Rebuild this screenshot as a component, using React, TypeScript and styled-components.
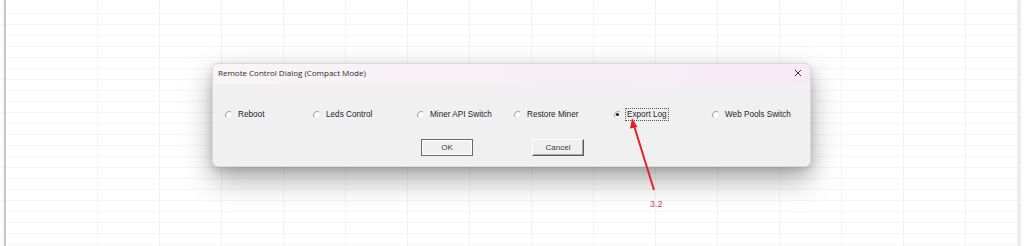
import React from 'react';
import styled, { createGlobalStyle } from 'styled-components';

const GlobalStyle = createGlobalStyle`
  html, body {
    margin: 0;
    padding: 0;
    background: #ffffff;
  }
  body {
    font-family: 'Liberation Sans', Arial, sans-serif;
  }
`;

const Sheet = styled.div`
  position: relative;
  width: 1024px;
  height: 246px;
  box-sizing: border-box;
  padding: 63px 0 0 212px;
  overflow: hidden;
  background-color: #ffffff;
  background-image:
    linear-gradient(to right, #c9c9c9 0 2px, transparent 2px),
    linear-gradient(to left, #ececec 0 4px, transparent 4px),
    repeating-linear-gradient(to right, transparent 0 61px, #f3f3f3 61px 62px),
    repeating-linear-gradient(to bottom, transparent 0 10px, #f5f5f5 10px 11px);
  background-position: 4px 0, -3px 0, 36px 0, 0 3px;
  background-repeat: no-repeat, no-repeat, repeat, repeat;
`;

const Dialog = styled.div`
  width: 599px;
  height: 104px;
  box-sizing: border-box;
  background: #f0f0f0;
  border: 1px solid #dadada;
  border-radius: 6px;
  box-shadow: 0 12px 28px rgba(0, 0, 0, 0.34), 0 3px 8px rgba(0, 0, 0, 0.14);
  display: flex;
  flex-direction: column;
  overflow: hidden;
`;

const TitleBar = styled.div`
  height: 20px;
  flex: none;
  display: flex;
  align-items: center;
  justify-content: space-between;
  padding: 0 8px 3px 5px;
  box-sizing: border-box;
  background: linear-gradient(to right, #f8f5f5, #f6eef5 60%, #f7eaf4);
`;

const Title = styled.span`
  font-family: 'Open Sans', 'Noto Sans', sans-serif;
  font-size: 8px;
  color: #2a2a2a;
`;

const CloseIcon = styled.svg`
  width: 8px;
  height: 8px;
`;

const RadioRow = styled.div`
  display: flex;
  align-items: center;
  height: 14px;
  margin-top: 23px;
  padding-left: 11px;
`;

const RadioItem = styled.label<{ $w: number }>`
  display: flex;
  align-items: center;
  width: ${(p) => p.$w}px;
  flex: none;
  font-size: 8.2px;
  color: #1e1e1e;
  gap: 3px;
`;

const RadioMark = styled.svg`
  width: 9px;
  height: 9px;
  flex: none;
`;

const Label = styled.span<{ $focused?: boolean }>`
  padding: 1px 1px;
  border: 1px dotted ${(p) => (p.$focused ? '#555' : 'transparent')};
`;

const ButtonRow = styled.div`
  display: flex;
  gap: 59px;
  margin-top: 18px;
  padding-left: 208px;
`;

const Button = styled.button<{ $default?: boolean }>`
  width: 52px;
  height: 17px;
  box-sizing: border-box;
  padding: 0;
  font-family: 'Liberation Sans', Arial, sans-serif;
  font-size: 8px;
  color: #3a3a3a;
  background: #f0f0f0;
  border: 1px solid;
  border-color: ${(p) =>
    p.$default ? '#6a6a6a' : '#ffffff #5a5a5a #5a5a5a #ffffff'};
  box-shadow: ${(p) =>
    p.$default ? 'inset 0 0 0 1px #ffffff' : 'inset -1px -1px 0 #a8a8a8'};
`;

const Annotation = styled.svg`
  position: absolute;
  left: 620px;
  top: 110px;
  width: 60px;
  height: 100px;
  overflow: visible;
`;

const radios = [
  { label: 'Reboot', w: 88 },
  { label: 'Leds Control', w: 104 },
  { label: 'Miner API Switch', w: 97 },
  { label: 'Restore Miner', w: 100 },
  { label: 'Export Log', w: 98, checked: true },
  { label: 'Web Pools Switch', w: 100 },
];

function Radio({ checked }: { checked?: boolean }) {
  return (
    <RadioMark viewBox="0 0 10 10">
      <circle cx="5" cy="5" r="4.2" fill="#ffffff" stroke="#e2e2e2" strokeWidth="0.8" />
      <path d="M2.2 7.6 A4 4 0 0 1 7.6 2.2" fill="none" stroke="#8a8a8a" strokeWidth="1" />
      {checked && <circle cx="5" cy="5" r="1.7" fill="#111" />}
    </RadioMark>
  );
}

export default function App() {
  return (
    <>
      <GlobalStyle />
      <Sheet>
        <Dialog>
          <TitleBar>
            <Title>Remote Control Dialog (Compact Mode)</Title>
            <CloseIcon viewBox="0 0 8 8">
              <path d="M1 1 L7 7 M7 1 L1 7" stroke="#333" strokeWidth="1" />
            </CloseIcon>
          </TitleBar>
          <RadioRow>
            {radios.map((r) => (
              <RadioItem key={r.label} $w={r.w}>
                <Radio checked={r.checked} />
                <Label $focused={r.checked}>{r.label}</Label>
              </RadioItem>
            ))}
          </RadioRow>
          <ButtonRow>
            <Button $default>OK</Button>
            <Button>Cancel</Button>
          </ButtonRow>
        </Dialog>
        <Annotation viewBox="0 0 60 100">
          <line x1="34" y1="80" x2="13.5" y2="14" stroke="#e3212b" strokeWidth="2" />
          <path d="M12 8 L17.5 17 L10 18.5 Z" fill="#e3212b" />
          <text x="30" y="97" fontSize="9" fill="#d8404a" fontFamily="Liberation Sans, Arial, sans-serif">
            3.2
          </text>
        </Annotation>
      </Sheet>
    </>
  );
}
